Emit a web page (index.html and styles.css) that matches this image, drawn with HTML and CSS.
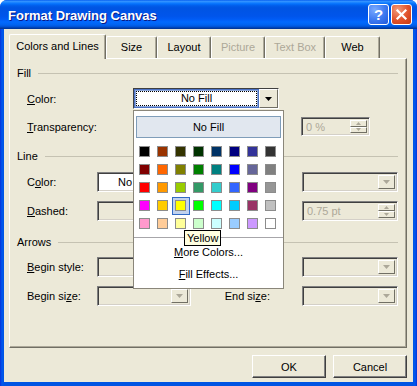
FILE: index.html
```html
<!DOCTYPE html>
<html lang="en">
<head>
  <meta charset="UTF-8" />
  <title>Format Drawing Canvas</title>
  <link rel="stylesheet" href="styles.css">
</head>
<body>

<div class="window">
  <div class="titlebar">
    <span class="title">Format Drawing Canvas</span>
    <div class="caption-buttons">
      <span class="cap-btn help">?</span>
      <span class="cap-btn close">
        <svg width="19" height="19" viewBox="0 0 19 19"><path d="M5.5 5.5L13.5 13.5M13.5 5.5L5.5 13.5" stroke="#fff" stroke-width="2.2" stroke-linecap="square"/></svg>
      </span>
    </div>
  </div>

  <div class="client">
    <div class="tabs">
      <div class="tab active">Colors and Lines</div>
      <div class="tab">Size</div>
      <div class="tab">Layout</div>
      <div class="tab disabled">Picture</div>
      <div class="tab disabled">Text Box</div>
      <div class="tab">Web</div>
    </div>

    <div class="panel">
      <!-- Fill -->
      <div class="group-head head-fill">Fill</div>
      <div class="row row-color">
        <span class="lbl lbl-wide"><u>C</u>olor:</span>
        <div class="color-combo">
          <div class="color-value"><span class="focus-rect">No Fill</span></div>
          <div class="drop-btn"><svg width="7" height="4" viewBox="0 0 7 4"><path d="M0 0H7L3.5 4Z"/></svg></div>

          <div class="popup">
            <div class="nofill">No Fill</div>
            <div class="swatches" id="swatches"></div>
            <div class="popup-sep"></div>
            <div class="menu-item"><u>M</u>ore Colors...</div>
            <div class="menu-item"><u>F</u>ill Effects...</div>
          </div>
        </div>
      </div>
      <div class="row row-trans">
        <span class="lbl lbl-wide"><u>T</u>ransparency:</span>
        <div class="field spin trans-spin">
          <span class="field-text">0 %</span>
          <div class="spin-btns">
            <span class="spin-btn"><svg width="5" height="3" viewBox="0 0 5 3"><path d="M0 3H5L2.5 0Z"/></svg></span>
            <span class="spin-btn"><svg width="5" height="3" viewBox="0 0 5 3"><path d="M0 0H5L2.5 3Z"/></svg></span>
          </div>
        </div>
      </div>

      <!-- Line -->
      <div class="group-head head-line">Line</div>
      <div class="row row-lcolor">
        <span class="lbl">C<u>o</u>lor:</span>
        <div class="field combo white"><span class="field-text indent">No</span></div>
        <span class="lbl-right"></span>
        <div class="field combo combo-right">
          <span class="field-text"></span>
          <span class="drop-btn small"><svg width="7" height="4" viewBox="0 0 7 4"><path d="M0 0H7L3.5 4Z"/></svg></span>
        </div>
      </div>
      <div class="row row-dashed">
        <span class="lbl"><u>D</u>ashed:</span>
        <div class="field combo">
          <span class="field-text"></span>
          <span class="drop-btn small"><svg width="7" height="4" viewBox="0 0 7 4"><path d="M0 0H7L3.5 4Z"/></svg></span>
        </div>
        <span class="lbl-right"></span>
        <div class="field spin combo-right">
          <span class="field-text">0.75 pt</span>
          <div class="spin-btns">
            <span class="spin-btn"><svg width="5" height="3" viewBox="0 0 5 3"><path d="M0 3H5L2.5 0Z"/></svg></span>
            <span class="spin-btn"><svg width="5" height="3" viewBox="0 0 5 3"><path d="M0 0H5L2.5 3Z"/></svg></span>
          </div>
        </div>
      </div>

      <!-- Arrows -->
      <div class="group-head head-arrows">Arrows</div>
      <div class="row row-bstyle">
        <span class="lbl"><u>B</u>egin style:</span>
        <div class="field combo">
          <span class="field-text"></span>
          <span class="drop-btn small"><svg width="7" height="4" viewBox="0 0 7 4"><path d="M0 0H7L3.5 4Z"/></svg></span>
        </div>
        <span class="lbl-right"></span>
        <div class="field combo combo-right">
          <span class="field-text"></span>
          <span class="drop-btn small"><svg width="7" height="4" viewBox="0 0 7 4"><path d="M0 0H7L3.5 4Z"/></svg></span>
        </div>
      </div>
      <div class="row row-bsize">
        <span class="lbl">Begin si<u>z</u>e:</span>
        <div class="field combo">
          <span class="field-text"></span>
          <span class="drop-btn small"><svg width="7" height="4" viewBox="0 0 7 4"><path d="M0 0H7L3.5 4Z"/></svg></span>
        </div>
        <span class="lbl-right">End si<u>z</u>e:</span>
        <div class="field combo combo-right">
          <span class="field-text"></span>
          <span class="drop-btn small"><svg width="7" height="4" viewBox="0 0 7 4"><path d="M0 0H7L3.5 4Z"/></svg></span>
        </div>
      </div>
    </div>

    <div class="footer">
      <button class="btn">OK</button>
      <button class="btn">Cancel</button>
    </div>
  </div>
</div>

<script>
  const palette = [
    ["Black", "#000000"], ["Brown", "#993300"], ["Olive Green", "#333300"], ["Dark Green", "#003300"],
    ["Dark Teal", "#003366"], ["Dark Blue", "#000080"], ["Indigo", "#333399"], ["Gray-80%", "#333333"],
    ["Dark Red", "#800000"], ["Orange", "#FF6600"], ["Dark Yellow", "#808000"], ["Green", "#008000"],
    ["Teal", "#008080"], ["Blue", "#0000FF"], ["Blue-Gray", "#666699"], ["Gray-50%", "#808080"],
    ["Red", "#FF0000"], ["Light Orange", "#FF9900"], ["Lime", "#99CC00"], ["Sea Green", "#339966"],
    ["Aqua", "#33CCCC"], ["Light Blue", "#3366FF"], ["Violet", "#800080"], ["Gray-40%", "#969696"],
    ["Pink", "#FF00FF"], ["Gold", "#FFCC00"], ["Yellow", "#FFFF00"], ["Bright Green", "#00FF00"],
    ["Turquoise", "#00FFFF"], ["Sky Blue", "#00CCFF"], ["Plum", "#993366"], ["Gray-25%", "#C0C0C0"],
    ["Rose", "#FF99CC"], ["Tan", "#FFCC99"], ["Light Yellow", "#FFFF99"], ["Light Green", "#CCFFCC"],
    ["Light Turquoise", "#CCFFFF"], ["Pale Blue", "#99CCFF"], ["Lavender", "#CC99FF"], ["White", "#FFFFFF"]
  ];
  const hovered = "Yellow";

  function renderSwatches() {
    const grid = document.getElementById("swatches");
    palette.forEach(([name, color]) => {
      const cell = document.createElement("div");
      cell.className = "cell" + (name === hovered ? " hot" : "");
      cell.innerHTML = `<span class="swatch" style="background:${color}"></span>`;
      if (name === hovered) {
        cell.innerHTML += `<span class="tooltip">${name}</span>`;
      }
      grid.appendChild(cell);
    });
  }

  renderSwatches();
</script>

</body>
</html>
```

FILE: styles.css
```css
* {
  box-sizing: border-box;
}

body {
  margin: 0;
  background: #ffffff;
  font-family: Tahoma, 'Liberation Sans', sans-serif;
  font-size: 11px;
  color: #000;
}

.window {
  width: 417px;
  height: 386px;
  display: flex;
  flex-direction: column;
  background: linear-gradient(to right, #0831D9 0, #0058EE 2px, #0054E3 4px, #0054E3 413px, #0058EE 415px, #0831D9 417px);
  border-radius: 7px 7px 0 0;
  overflow: hidden;
}

.titlebar {
  height: 29px;
  flex: none;
  display: flex;
  align-items: center;
  justify-content: space-between;
  padding: 0 5px 0 8px;
  background: linear-gradient(to bottom,
    #0058EE 0%, #3593FF 4%, #288EFF 7%, #127DFF 10%, #036FFC 14%,
    #0262EE 18%, #0057E5 24%, #0054E3 30%, #0055EB 56%, #005BF5 66%,
    #026AFE 76%, #0062EF 86%, #0052D6 92%, #0040AB 96%, #003092 100%);
}

.title {
  color: #fff;
  font-family: 'Liberation Sans', sans-serif;
  font-weight: bold;
  font-size: 13px;
  text-shadow: 1px 1px 0 #0A1883;
  margin-top: 1px;
}

.caption-buttons {
  display: flex;
  gap: 2px;
}

.cap-btn {
  width: 21px;
  height: 21px;
  border: 1px solid #fff;
  border-radius: 3px;
  display: flex;
  align-items: center;
  justify-content: center;
  color: #fff;
  font-family: 'Liberation Sans', sans-serif;
  font-weight: bold;
  font-size: 15px;
}

.help {
  background: radial-gradient(circle at 30% 25%, #7AAAFF 0%, #3C78F0 55%, #2158DA 100%);
}

.close {
  background: radial-gradient(circle at 30% 25%, #F29A7A 0%, #E0512A 55%, #C33A14 100%);
}

.client {
  flex: 1;
  margin: 0 4px 4px;
  padding: 5px 6px 0 5px;
  background: #ECE9D8;
  display: flex;
  flex-direction: column;
}

/* tabs */
.tabs {
  display: flex;
  align-items: flex-end;
  height: 24px;
  flex: none;
}

.tab {
  height: 22px;
  line-height: 20px;
  text-align: center;
  border-top: 1px solid #fff;
  border-left: 1px solid #fff;
  border-right: 1px solid #716F64;
  box-shadow: inset -1px 0 0 #ACA899;
  border-radius: 2px 2px 0 0;
  background: #ECE9D8;
}

.tab.active {
  height: 25px;
  line-height: 22px;
  margin-bottom: -1px;
  position: relative;
  z-index: 1;
}

.tab.disabled {
  color: #ACA899;
}

.tab:nth-child(1) { width: 97px; }
.tab:nth-child(2) { width: 51px; }
.tab:nth-child(3) { width: 54px; }
.tab:nth-child(4) { width: 54px; }
.tab:nth-child(5) { width: 60px; }
.tab:nth-child(6) { width: 55px; }

/* panel */
.panel {
  height: 290px;
  flex: none;
  border: 1px solid;
  border-color: #fff #716F64 #716F64 #fff;
  box-shadow: inset -1px -1px 0 #ACA899;
  padding: 0 8px 0 7px;
}

.group-head {
  display: flex;
  align-items: center;
  height: 14px;
}

.group-head::after {
  content: "";
  flex: 1;
  height: 1px;
  margin-left: 7px;
  background: #C5C2B2;
}

.head-fill { margin-top: 7px; }
.head-line { margin-top: 13px; }
.head-arrows { margin-top: 14px; }

.row {
  display: flex;
  align-items: center;
  padding-left: 10px;
}

.row-color { margin-top: 8px; height: 21px; }
.row-trans { margin-top: 8px; height: 19px; }
.row-lcolor { margin-top: 9px; height: 20px; }
.row-dashed { margin-top: 9px; height: 20px; }
.row-bstyle { margin-top: 8px; height: 20px; }
.row-bsize { margin-top: 9px; height: 20px; }

.lbl {
  width: 70px;
  flex: none;
}

.lbl-wide {
  width: 106px;
}

.lbl-right {
  width: 111px;
  flex: none;
  text-align: right;
  padding-right: 32px;
}

/* fields */
.field {
  height: 100%;
  display: flex;
  align-items: center;
  border: 1px solid;
  border-color: #808080 #fff #fff #808080;
  box-shadow: inset 1px 1px 0 #404040, inset -1px -1px 0 #D4D0C8;
  background: #ECE9D8;
  color: #ACA899;
  padding: 2px;
}

.field.white {
  background: #fff;
  color: #000;
}

.field-text {
  flex: 1;
  padding-left: 2px;
}

.field-text.indent {
  padding-left: 18px;
}

.combo {
  width: 94px;
}

.combo-right {
  width: 96px;
}

.trans-spin {
  width: 69px;
  margin-left: 168px;
}

.drop-btn {
  width: 19px;
  height: 100%;
  display: flex;
  align-items: center;
  justify-content: center;
  background: #ECE9D8;
  border: 1px solid;
  border-color: #fff #716F64 #716F64 #fff;
}

.drop-btn.small {
  width: 17px;
}

.drop-btn svg {
  fill: #000;
}

.field .drop-btn svg,
.spin-btn svg {
  fill: #ACA899;
}

.spin-btns {
  width: 17px;
  height: 100%;
  display: flex;
  flex-direction: column;
}

.spin-btn {
  flex: 1;
  display: flex;
  align-items: center;
  justify-content: center;
  border: 1px solid;
  border-color: #fff #716F64 #716F64 #fff;
}

/* fill colour picker */
.color-combo {
  width: 146px;
  height: 21px;
  display: flex;
  position: relative;
  border: 1px solid;
  border-color: #404040 #fff #fff #404040;
  background: #fff;
}

.color-value {
  flex: 1;
  padding: 1px;
  border: 1px solid #4A71C4;
  box-shadow: inset 0 0 0 1px #8EA8DB;
  display: flex;
}

.focus-rect {
  flex: 1;
  border: 1px dotted #000;
  text-align: center;
  line-height: 13px;
}

.popup {
  position: absolute;
  left: -1px;
  top: 21px;
  width: 151px;
  height: 179px;
  background: #fff;
  border: 1px solid #8A867A;
  padding: 5px 2px 0;
  color: #000;
  z-index: 5;
}

.nofill {
  width: 145px;
  height: 22px;
  line-height: 20px;
  text-align: center;
  background: #E1E7EF;
  border: 1px solid #7F9DB9;
}

.swatches {
  margin-top: 5px;
  display: grid;
  grid-template-columns: repeat(8, 18px);
  grid-auto-rows: 18px;
}

.cell {
  position: relative;
}

.cell.hot {
  background: #C1D2EE;
  box-shadow: inset 0 0 0 1px #316AC5;
}

.swatch {
  display: block;
  width: 11px;
  height: 11px;
  margin: 3px 4px 4px 3px;
  border: 1px solid #8C8C8C;
}

.tooltip {
  position: absolute;
  left: 12px;
  top: 33px;
  height: 16px;
  line-height: 14px;
  padding: 0 2px;
  background: #FFFFE1;
  border: 1px solid #000;
  white-space: nowrap;
  z-index: 2;
}

.popup-sep {
  margin: 4px -2px 0;
  height: 1px;
  background: #A7A6AA;
}

.popup-sep + .menu-item {
  margin-top: 3px;
}

.menu-item {
  height: 22px;
  line-height: 22px;
  text-align: center;
}

/* buttons */
.footer {
  display: flex;
  justify-content: flex-end;
  gap: 7px;
  margin-top: 7px;
}

.btn {
  width: 74px;
  height: 23px;
  font-family: Tahoma, 'Liberation Sans', sans-serif;
  font-size: 11px;
  color: #000;
  background: #ECE9D8;
  border: 1px solid;
  border-color: #fff #404040 #404040 #fff;
  box-shadow: inset -1px -1px 0 #808080;
  padding: 0;
}
```
